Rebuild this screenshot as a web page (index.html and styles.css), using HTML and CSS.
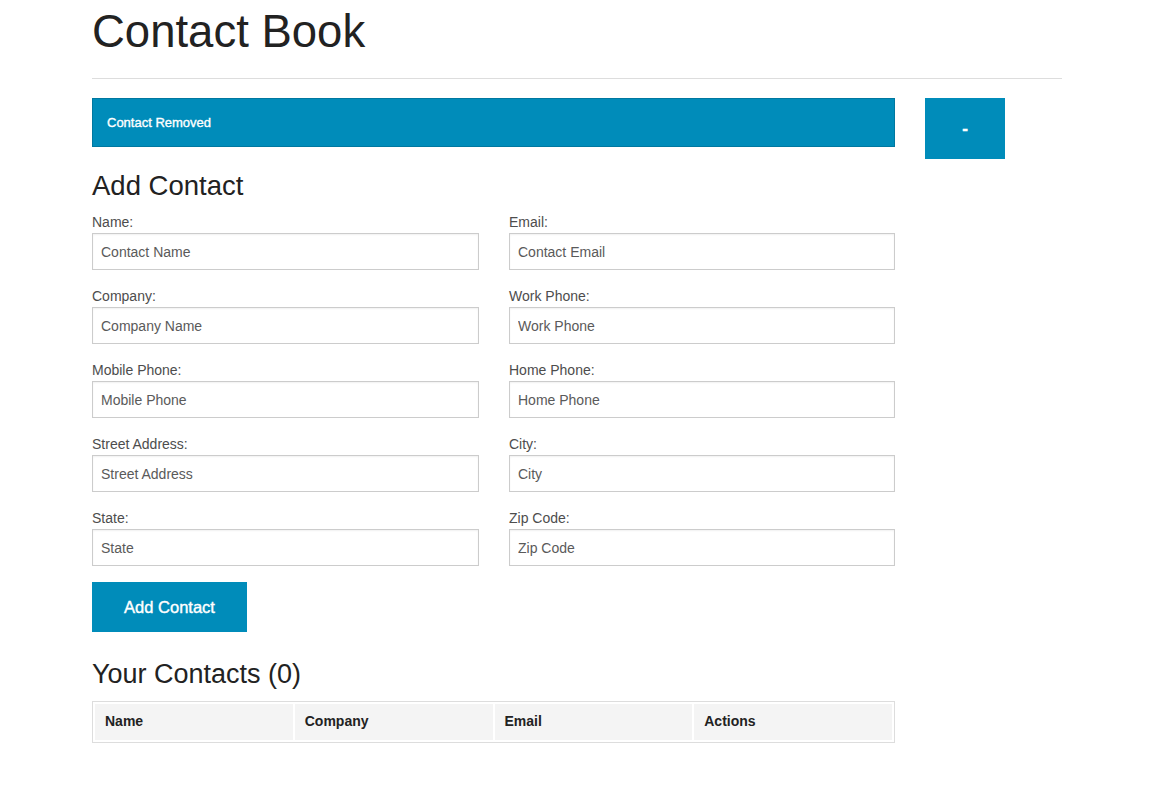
FILE: index.html
```html
<!DOCTYPE html>
<html lang="en">
<head>
<meta charset="utf-8">
<title>Contact Book</title>
<link rel="stylesheet" href="styles.css">
</head>
<body>
<div class="page">
  <h1 class="title">Contact Book</h1>
  <hr class="divider">
  <div class="layout">
    <main class="main">
      <div class="alert">Contact Removed</div>
      <h3 class="section-title">Add Contact</h3>
      <form class="form">
        <div class="field"><label>Name:</label><input type="text" placeholder="Contact Name"></div>
        <div class="field"><label>Email:</label><input type="text" placeholder="Contact Email"></div>
        <div class="field"><label>Company:</label><input type="text" placeholder="Company Name"></div>
        <div class="field"><label>Work Phone:</label><input type="text" placeholder="Work Phone"></div>
        <div class="field"><label>Mobile Phone:</label><input type="text" placeholder="Mobile Phone"></div>
        <div class="field"><label>Home Phone:</label><input type="text" placeholder="Home Phone"></div>
        <div class="field"><label>Street Address:</label><input type="text" placeholder="Street Address"></div>
        <div class="field"><label>City:</label><input type="text" placeholder="City"></div>
        <div class="field"><label>State:</label><input type="text" placeholder="State"></div>
        <div class="field"><label>Zip Code:</label><input type="text" placeholder="Zip Code"></div>
        <div class="actions"><button type="button" class="btn btn-add">Add Contact</button></div>
      </form>
      <h3 class="section-title contacts-title">Your Contacts (0)</h3>
      <table class="contacts">
        <thead>
          <tr><th>Name</th><th>Company</th><th>Email</th><th>Actions</th></tr>
        </thead>
      </table>
    </main>
    <aside class="side">
      <button type="button" class="btn btn-toggle">-</button>
    </aside>
  </div>
</div>
</body>
</html>
```
FILE: styles.css
```css
* { box-sizing: border-box; }
html, body { margin: 0; padding: 0; background: #fff; }
body {
  font-family: "Liberation Sans", Arial, Helvetica, sans-serif;
  color: #222;
}
.page {
  width: 970px;
  margin: 0 auto;
  position: relative;
  left: -1px;
}
.title {
  margin: 1px 0 0;
  font-size: 45.5px;
  line-height: 61px;
  font-weight: normal;
  color: #222;
}
.divider {
  margin: 16px 0 0;
  border: 0;
  border-top: 1px solid #ddd;
  height: 0;
}
.layout {
  display: flex;
  gap: 30px;
  margin-top: 19px;
}
.main { width: 803px; }
.side { width: 137px; }
.alert {
  background: #008cba;
  border: 1px solid #0078a0;
  color: #fff;
  font-size: 13px;
  line-height: 19px;
  padding: 14px;
  margin-bottom: 20px;
  -webkit-text-stroke: 0.35px #fff;
}
.section-title {
  margin: 0 0 7px;
  font-size: 27.5px;
  line-height: 38px;
  font-weight: normal;
  color: #222;
}
.contacts-title { font-size: 27px; margin-bottom: 8px; }
.form {
  display: grid;
  grid-template-columns: 387px 386px;
  column-gap: 30px;
}
.field { display: flex; flex-direction: column; }
.field label {
  font-size: 14px;
  line-height: 21px;
  color: #4d4d4d;
}
.field input {
  height: 37px;
  border: 1px solid #ccc;
  padding: 8px;
  font-family: inherit;
  font-size: 14px;
  color: #222;
  margin: 0 0 16px;
  box-shadow: inset 0 1px 2px rgba(0,0,0,0.06);
  outline: none;
}
.field input::placeholder { color: #5a5a5a; opacity: 1; }
.actions { grid-column: 1 / -1; }
.btn {
  border: 0;
  background: #008cba;
  color: #fff;
  font-family: inherit;
  cursor: pointer;
  -webkit-text-stroke: 0.4px #fff;
}
.btn-add {
  width: 155px;
  height: 50px;
  font-size: 16.5px;
  padding: 0;
  margin-bottom: 23px;
  display: block;
}
.btn-toggle {
  width: 80px;
  height: 61px;
  font-size: 17px;
  font-weight: bold;
  padding: 0;
  display: block;
}
.contacts {
  width: 100%;
  table-layout: fixed;
  border: 1px solid #ddd;
  border-spacing: 2px;
}
.contacts th {
  background: #f4f4f4;
  text-align: left;
  font-size: 14px;
  font-weight: bold;
  line-height: 18px;
  padding: 8px 10px 10px;
  color: #222;
}
```
